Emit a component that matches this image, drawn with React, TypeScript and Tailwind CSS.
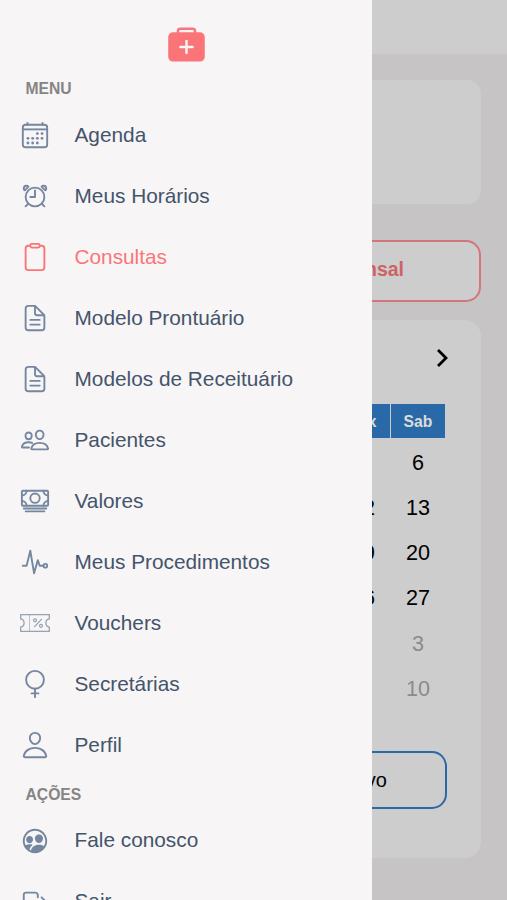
import type { IconType } from 'react-icons'
import {
    IoAlarmOutline,
    IoCalendarOutline,
    IoCashOutline,
    IoClipboardOutline,
    IoDocumentTextOutline,
    IoFemaleOutline,
    IoLogOutOutline,
    IoMedkit,
    IoPeopleCircleOutline,
    IoPeopleOutline,
    IoPersonOutline,
    IoPulseOutline,
} from 'react-icons/io5'

type Item = { label: string; icon: IconType | typeof VoucherIcon; active?: boolean }

const menu: Item[] = [
    { label: 'Agenda', icon: IoCalendarOutline },
    { label: 'Meus Horários', icon: IoAlarmOutline },
    { label: 'Consultas', icon: IoClipboardOutline, active: true },
    { label: 'Modelo Prontuário', icon: IoDocumentTextOutline },
    { label: 'Modelos de Receituário', icon: IoDocumentTextOutline },
    { label: 'Pacientes', icon: IoPeopleOutline },
    { label: 'Valores', icon: IoCashOutline },
    { label: 'Meus Procedimentos', icon: IoPulseOutline },
    { label: 'Vouchers', icon: VoucherIcon },
    { label: 'Secretárias', icon: IoFemaleOutline },
    { label: 'Perfil', icon: IoPersonOutline },
]

const actions: Item[] = [
    { label: 'Fale conosco', icon: IoPeopleCircleOutline },
    { label: 'Sair', icon: IoLogOutOutline },
]

// Last two columns of the month
const weeks = [
    { fri: '', sat: '6' },
    { fri: '12', sat: '13' },
    { fri: '19', sat: '20' },
    { fri: '26', sat: '27' },
    { fri: '', sat: '3', muted: true },
    { fri: '', sat: '10', muted: true },
]

export default function App() {
    return (
        <div className="flex h-[900px] w-[507px] overflow-hidden bg-[#c7c4c5] font-['Liberation_Sans',Arial,sans-serif]">
            <Drawer />
            <Page />
        </div>
    )
}

function Drawer() {
    return (
        <nav className="flex h-full w-[372px] shrink-0 flex-col overflow-hidden bg-[#f7f5f6]">
            <div className="flex h-[74px] shrink-0 justify-center pt-[25px]">
                <IoMedkit className="size-[39px] text-[#fb7578]" />
            </div>
            <SectionTitle>MENU</SectionTitle>
            <ul>
                {menu.map((item) => <MenuItem key={item.label} {...item} />)}
            </ul>
            <div className="h-[4px] shrink-0" />
            <SectionTitle>AÇÕES</SectionTitle>
            <ul>
                {actions.map((item) => <MenuItem key={item.label} {...item} />)}
            </ul>
        </nav>
    )
}

function SectionTitle({ children }: { children: string }) {
    return <h2 className="h-[30px] shrink-0 pl-[25.5px] text-[15.7px] leading-[29px] font-bold text-[#858585]">{children}</h2>
}

function MenuItem({ label, icon: Icon, active }: Item) {
    return (
        <li className={`flex h-[61.06px] items-center pl-5 ${active ? 'text-[#fb7578]' : 'text-[#44546b]'}`}>
            <Icon className={`mt-px size-[30px] shrink-0 ${active ? '' : 'text-[#75869f]'}`} />
            <span className="pt-px pl-[24.5px] text-[20.8px] leading-none">{label}</span>
        </li>
    )
}

function VoucherIcon({ className }: { className?: string }) {
    return (
        <svg viewBox="0 0 30 30" fill="none" stroke="currentColor" strokeOpacity=".75" className={className}>
            <path d="M.7 6.7h28.6v4.200c-2 .3-3.400 1.900-3.400 4.100s1.400 3.800 3.400 4.100v4.200H.7v-4.200c2-.3 3.400-1.900 3.400-4.100S2.700 11.200.7 10.900z" strokeWidth="1.3" />
            <path d="M9.500 7v16" strokeWidth=".9" strokeOpacity=".5" />
            <path d="m21.800 10.800-7.600 8.400" strokeWidth="1.2" />
            <circle cx="15" cy="12.300" r="1.500" strokeWidth="1.2" />
            <circle cx="21" cy="17.800" r="1.500" strokeWidth="1.2" />
        </svg>
    )
}

function Page() {
    return (
        <main className="flex min-w-0 flex-1 flex-col overflow-hidden text-black">
            <div className="h-[54px] shrink-0 bg-[#cdcdcd]" />
            <div className="mt-[26px] mr-[26px] h-[124px] shrink-0 rounded-r-[14px] bg-[#cdcdcd]" />

            <div className="mt-9 mr-[26px] flex h-[62px] shrink-0 items-center rounded-r-[15px] border-2 border-l-0 border-[#d3757a] bg-[#cdcdcd] text-[19.5px] font-bold text-[#cd6267]">
                <span className="flex w-[32px] justify-end pb-[2px]">Mensal</span>
            </div>

            <section className="mt-[18px] mr-[26px] flex h-[538px] shrink-0 flex-col rounded-r-[16px] bg-[#cdcdcd]">
                <div className="flex h-[84px] shrink-0 justify-end pt-[28px] pr-[33px]">
                    <svg viewBox="0 0 12 20" className="h-5 w-3" fill="none" stroke="currentColor" strokeWidth="2.8">
                        <path d="m2 2 8 8-8 8" />
                    </svg>
                </div>
                <div className="flex h-[34px] shrink-0 text-[15.7px] font-bold text-[#dcdcdc]">
                    <div className="flex w-[17.5px] items-center justify-end bg-[#2969a7] pt-[2px] pr-[13px]">Sex</div>
                    <div className="ml-[1.5px] flex w-[54px] items-center justify-center bg-[#2969a7] pt-[2px]">Sab</div>
                </div>
                <div className="h-[2px] shrink-0" />
                {weeks.map((week) => (
                    <div key={week.sat} className={`flex h-[45.2px] shrink-0 items-center pt-px text-[21.6px] ${week.muted ? 'text-[#8b8b8b]' : ''}`}>
                        <span className="flex w-[3px] justify-end">{week.fri}</span>
                        <span className="ml-[16px] w-[54px] text-center">{week.sat}</span>
                    </div>
                ))}
                <div className="mt-[40px] mr-[34px] flex h-[58px] shrink-0 items-center rounded-r-[15px] border-[2.5px] border-l-0 border-[#2969a7] text-[20px]">
                    <span className="flex w-[15px] justify-end pb-px">Novo</span>
                </div>
            </section>
        </main>
    )
}
